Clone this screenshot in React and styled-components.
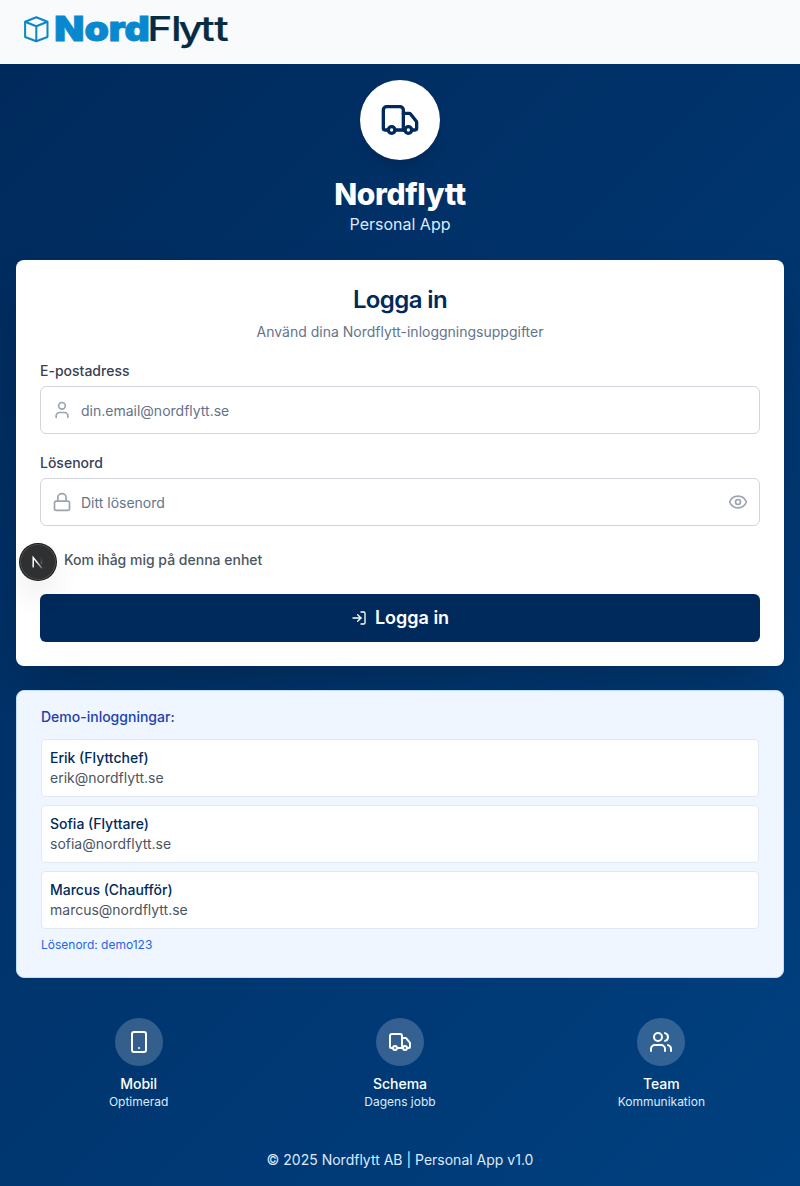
import React from "react";
import styled, { createGlobalStyle } from "styled-components";
import { Truck, User, Lock, Eye, LogIn, Smartphone, Users } from "lucide-react";

const GlobalStyle = createGlobalStyle`
  *, *::before, *::after { box-sizing: border-box; }
  body { margin: 0; font-family: Inter, "Liberation Sans", sans-serif; }
  h1, h2, h3, p { margin: 0; }
`;

const Page = styled.div`
  min-height: 1186px;
  display: flex;
  flex-direction: column;
`;

const Header = styled.header`
  height: 64px;
  padding: 0 24px;
  display: flex;
  align-items: flex-start;
  background: #f8fafc;
`;

const Main = styled.main`
  flex: 1;
  padding: 16px;
  background: linear-gradient(135deg, #002a5c 0%, #004080 100%);
`;

const Hero = styled.section`
  display: flex;
  flex-direction: column;
  align-items: center;
  margin-bottom: 24px;
`;

const HeroBadge = styled.div`
  width: 80px;
  height: 80px;
  margin-bottom: 16px;
  display: grid;
  place-items: center;
  border-radius: 50%;
  background: #fff;
  color: #002a5c;
  box-shadow: 0 10px 15px -3px rgba(0, 0, 0, 0.1), 0 4px 6px -4px rgba(0, 0, 0, 0.1);
`;

const AppName = styled.h1`
  font-size: 30px;
  line-height: 36px;
  font-weight: 800;
  letter-spacing: -0.3px;
  color: #fff;
`;

const Tagline = styled.p`
  font-size: 16px;
  line-height: 24px;
  color: #dbeafe;
`;

const LoginCard = styled.section`
  height: 406px;
  padding: 24px;
  border-radius: 8px;
  background: #fff;
  box-shadow: 0 25px 50px -12px rgba(0, 0, 0, 0.25);
`;

const CardTitle = styled.h2`
  font-size: 24px;
  line-height: 32px;
  font-weight: 600;
  letter-spacing: -0.6px;
  text-align: center;
  color: #002a5c;
`;

const CardHint = styled.p`
  margin: 6px 0 19px;
  font-size: 14px;
  line-height: 20px;
  text-align: center;
  color: #64748b;
`;

const Field = styled.label`
  display: block;
  margin-bottom: 19px;
`;

const FieldLabel = styled.span`
  display: block;
  margin-bottom: 5px;
  font-size: 14px;
  line-height: 20px;
  font-weight: 500;
  color: #374151;
`;

const InputBox = styled.span`
  height: 48px;
  padding: 0 11px;
  display: flex;
  align-items: center;
  gap: 9px;
  border: 1px solid #d1d5db;
  border-radius: 6px;
  color: #9ca3af;
`;

const Input = styled.input`
  flex: 1;
  min-width: 0;
  padding: 2px 0 0;
  border: 0;
  outline: 0;
  background: transparent;
  font: 14px/20px Inter, "Liberation Sans", sans-serif;
  color: #0f172a;
  &::placeholder { color: #64748b; opacity: 1; }
`;

const Remember = styled.div`
  position: relative;
  margin-top: 24px;
  padding-left: 24px;
  font-size: 14px;
  line-height: 20px;
  font-weight: 500;
  color: #4b5563;
`;

const DevBadge = styled.div`
  position: absolute;
  left: -20px;
  top: -6px;
  width: 36px;
  height: 36px;
  display: grid;
  place-items: center;
  border-radius: 50%;
  background: #2f3032;
  box-shadow: 0 0 0 1px #171717, inset 0 0 0 1px rgba(255, 255, 255, 0.14),
    0 16px 32px -8px rgba(0, 0, 0, 0.24);
`;

const SubmitButton = styled.button`
  width: 100%;
  height: 48px;
  margin-top: 24px;
  padding: 0;
  display: flex;
  align-items: center;
  justify-content: center;
  gap: 8px;
  border: 0;
  border-radius: 6px;
  background: #002a5c;
  color: #fff;
  font: 600 18px/28px Inter, "Liberation Sans", sans-serif;
`;

const DemoCard = styled.section`
  margin-top: 24px;
  padding: 16px 24px 24px;
  border: 1px solid #bfdbfe;
  border-radius: 8px;
  background: #eff6ff;
`;

const DemoTitle = styled.h3`
  margin-bottom: 12px;
  font-size: 14px;
  line-height: 20px;
  font-weight: 500;
  color: #1e40af;
`;

const AccountList = styled.div`
  display: flex;
  flex-direction: column;
  gap: 8px;
`;

const Account = styled.div`
  padding: 8px;
  border: 1px solid #e2e8f0;
  border-radius: 4px;
  background: #fff;
  font-size: 14px;
  line-height: 20px;
  color: #4b5563;
`;

const AccountName = styled.p`
  font-weight: 500;
  color: #002a5c;
`;

const DemoPassword = styled.p`
  margin-top: 8px;
  font-size: 12px;
  line-height: 16px;
  color: #2563eb;
`;

const Features = styled.section`
  margin-top: 40px;
  display: grid;
  grid-template-columns: repeat(3, 1fr);
  gap: 16px;
`;

const Feature = styled.div`
  display: flex;
  flex-direction: column;
  align-items: center;
  color: #fff;
`;

const FeatureIcon = styled.div`
  width: 48px;
  height: 48px;
  margin-bottom: 8px;
  display: grid;
  place-items: center;
  border-radius: 50%;
  background: rgba(255, 255, 255, 0.2);
`;

const FeatureName = styled.p`
  font-size: 14px;
  line-height: 20px;
  font-weight: 500;
`;

const FeatureNote = styled.p`
  font-size: 12px;
  line-height: 16px;
  color: #dbeafe;
`;

const Copyright = styled.footer`
  margin-top: 40px;
  font-size: 14px;
  line-height: 20px;
  text-align: center;
  color: #dbeafe;
`;

const accounts = [
  { name: "Erik (Flyttchef)", email: "erik@nordflytt.se" },
  { name: "Sofia (Flyttare)", email: "sofia@nordflytt.se" },
  { name: "Marcus (Chaufför)", email: "marcus@nordflytt.se" },
];

const features = [
  { icon: Smartphone, name: "Mobil", note: "Optimerad" },
  { icon: Truck, name: "Schema", note: "Dagens jobb" },
  { icon: Users, name: "Team", note: "Kommunikation" },
];

function Logo() {
  return (
    <svg width="206" height="64" viewBox="24 0 206 64" role="img" aria-label="NordFlytt">
      <g fill="none" stroke="#0b86c8" strokeWidth="2" strokeLinejoin="round">
        <path d="M36.3 17.2 47.5 21.7V37L36.3 41.2 25.1 37V21.7Z" />
        <path d="M25.1 21.7 36.3 26.2 47.5 21.7M36.3 26.2V41.2" />
      </g>
      <g fontFamily="Inter, sans-serif" fontSize="34.2">
        <text x="54.3" y="41.3" fontWeight="900" fill="#0788cf" stroke="#0788cf" strokeWidth="0.9" textLength="95.5" lengthAdjust="spacingAndGlyphs">Nord</text>
        <text transform="scale(1.24 1)" x="118.7 138 144 161.4 172.7" y="41.3" fontWeight="500" fill="#062c43" stroke="#062c43" strokeWidth="0.2">Flytt</text>
      </g>
    </svg>
  );
}

export default function App() {
  return (
    <>
      <GlobalStyle />
      <Page>
        <Header>
          <Logo />
        </Header>
        <Main>
          <Hero>
            <HeroBadge>
              <Truck size={40} />
            </HeroBadge>
            <AppName>Nordflytt</AppName>
            <Tagline>Personal App</Tagline>
          </Hero>
          <LoginCard>
            <CardTitle>Logga in</CardTitle>
            <CardHint>Använd dina Nordflytt-inloggningsuppgifter</CardHint>
            <Field>
              <FieldLabel>E-postadress</FieldLabel>
              <InputBox>
                <User size={20} />
                <Input type="email" placeholder="din.email@nordflytt.se" />
              </InputBox>
            </Field>
            <Field>
              <FieldLabel>Lösenord</FieldLabel>
              <InputBox>
                <Lock size={20} />
                <Input type="password" placeholder="Ditt lösenord" />
                <Eye size={20} />
              </InputBox>
            </Field>
            <Remember>
              Kom ihåg mig på denna enhet
              <DevBadge>
                <svg width="14" height="14" viewBox="0 0 14 14" fill="none" strokeWidth="1.5">
                  <defs>
                    <linearGradient id="fade" x1="6" y1="7" x2="11.5" y2="14" gradientUnits="userSpaceOnUse">
                      <stop stopColor="#fff" />
                      <stop offset="1" stopColor="#fff" stopOpacity="0.2" />
                    </linearGradient>
                    <linearGradient id="bar" x1="0" y1="2" x2="0" y2="9" gradientUnits="userSpaceOnUse">
                      <stop stopColor="#fff" stopOpacity="0" />
                      <stop offset="1" stopColor="#fff" stopOpacity="0.25" />
                    </linearGradient>
                  </defs>
                  <path d="M2.2 12.5V2.6L11 13.4" stroke="url(#fade)" />
                  <path d="M10.5 2v7" stroke="url(#bar)" />
                </svg>
              </DevBadge>
            </Remember>
            <SubmitButton>
              <LogIn size={16} />
              Logga in
            </SubmitButton>
          </LoginCard>
          <DemoCard>
            <DemoTitle>Demo-inloggningar:</DemoTitle>
            <AccountList>
              {accounts.map((account) => (
                <Account key={account.email}>
                  <AccountName>{account.name}</AccountName>
                  <p>{account.email}</p>
                </Account>
              ))}
            </AccountList>
            <DemoPassword>Lösenord: demo123</DemoPassword>
          </DemoCard>
          <Features>
            {features.map(({ icon: Icon, name, note }) => (
              <Feature key={name}>
                <FeatureIcon>
                  <Icon size={24} />
                </FeatureIcon>
                <FeatureName>{name}</FeatureName>
                <FeatureNote>{note}</FeatureNote>
              </Feature>
            ))}
          </Features>
          <Copyright>© 2025 Nordflytt AB | Personal App v1.0</Copyright>
        </Main>
      </Page>
    </>
  );
}
